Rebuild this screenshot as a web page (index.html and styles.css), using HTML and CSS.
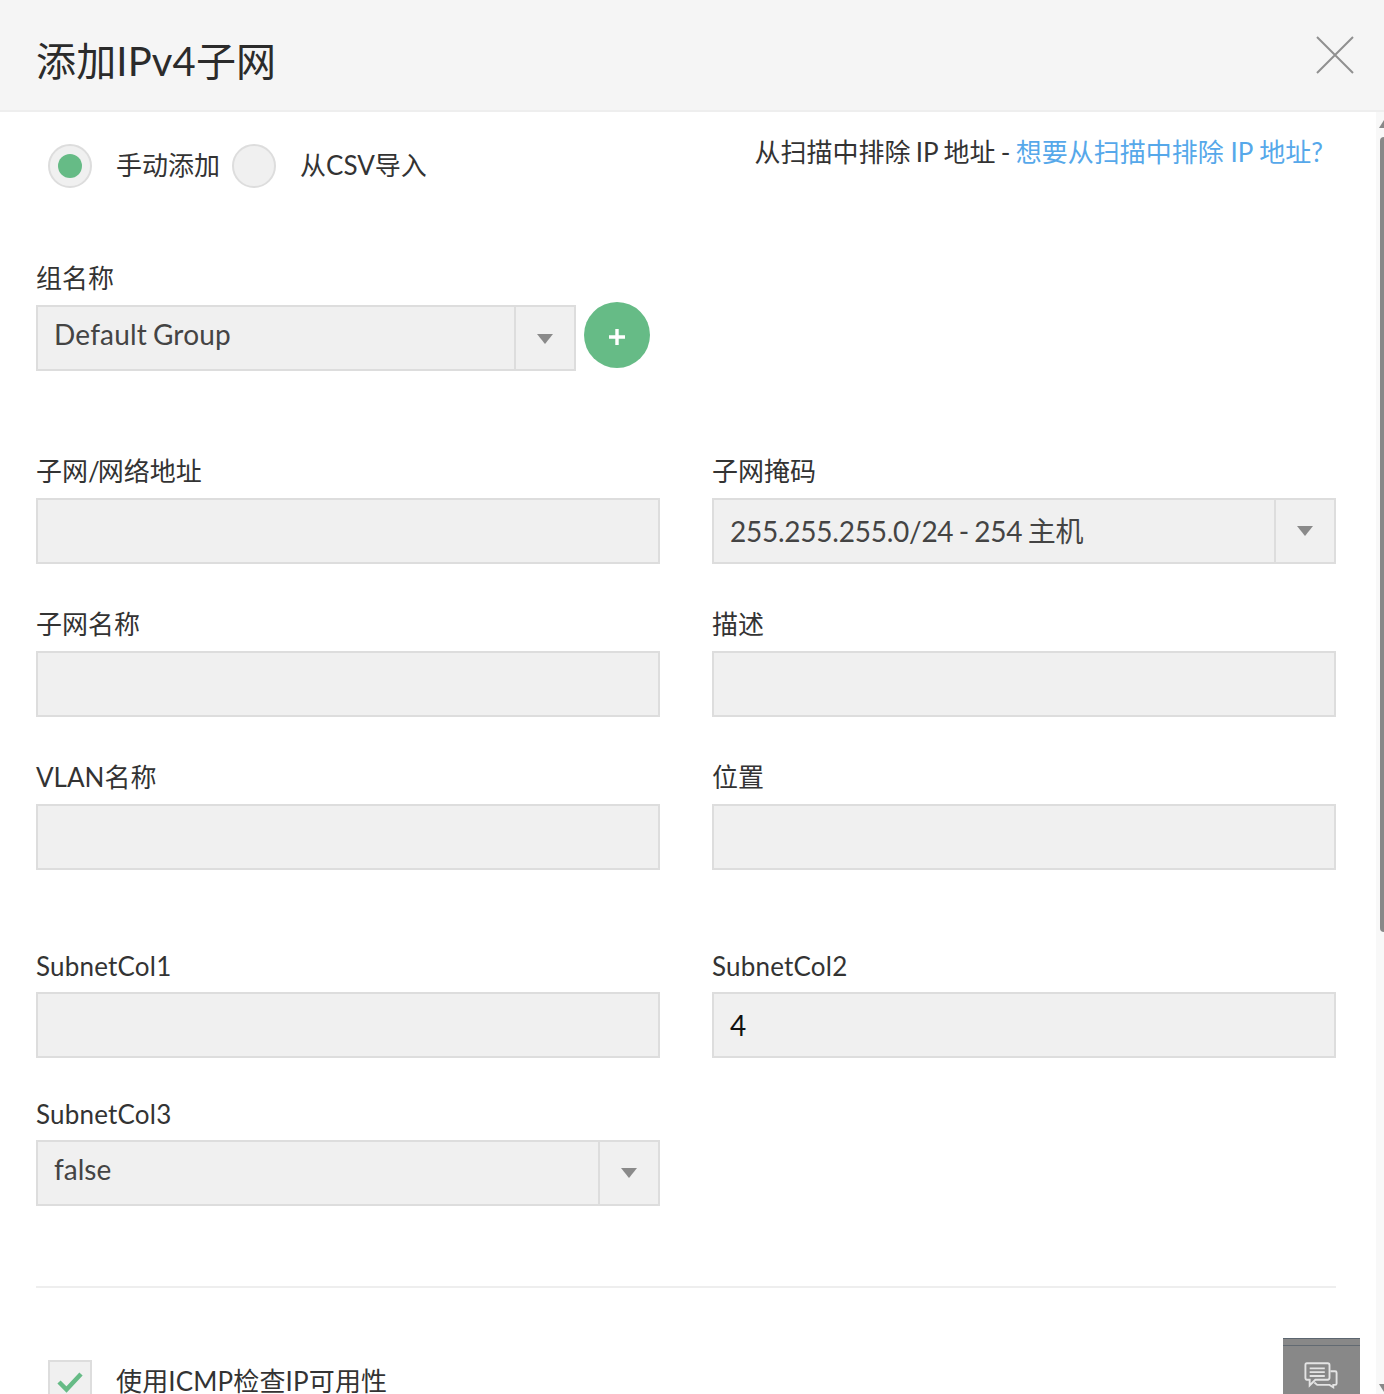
FILE: index.html
```html
<!DOCTYPE html>
<html lang="zh-CN">
<head>
<meta charset="utf-8">
<title>添加IPv4子网</title>
<link rel="stylesheet" href="styles.css">
</head>
<body>
<div class="dialog">
  <header class="head">
    <h1 class="title">添加IPv4子网</h1>
    <svg class="close" width="40" height="40" viewBox="0 0 40 40"><path d="M2 2L38 38M38 2L2 38" stroke="#909090" stroke-width="2" fill="none"/></svg>
  </header>
  <main class="body">
    <div class="top">
      <div class="radios">
        <span class="radio on"><i class="dot"></i></span><span class="radio-text first">手动添加</span>
        <span class="radio"></span><span class="radio-text">从CSV导入</span>
      </div>
      <p class="hint">从扫描中排除 IP 地址 - <a class="link">想要从扫描中排除 IP 地址?</a></p>
    </div>

    <div class="group">
      <label class="label">组名称</label>
      <div class="group-row">
        <div class="select wide"><span class="value group-value">Default Group</span><span class="arrow"><i class="tri"></i></span></div>
        <span class="add"><svg width="18" height="18" viewBox="0 0 18 18"><path d="M9 1V17M1 9H17" stroke="#fff" stroke-width="3.4"/></svg></span>
      </div>
    </div>

    <div class="grid">
      <div><label class="label">子网<span class="slash">/</span>网络地址</label><div class="field"></div></div>
      <div><label class="label">子网掩码</label><div class="select mask"><span class="value">255.255.255.0/24 - 254 主机</span><span class="arrow"><i class="tri"></i></span></div></div>
      <div><label class="label">子网名称</label><div class="field"></div></div>
      <div><label class="label">描述</label><div class="field"></div></div>
      <div><label class="label">VLAN名称</label><div class="field"></div></div>
      <div><label class="label">位置</label><div class="field"></div></div>
    </div>

    <div class="grid custom">
      <div><label class="label">SubnetCol1</label><div class="field"></div></div>
      <div><label class="label">SubnetCol2</label><div class="field filled">4</div></div>
      <div><label class="label">SubnetCol3</label><div class="select"><span class="value up">false</span><span class="arrow"><i class="tri"></i></span></div></div>
    </div>

    <hr class="rule">

    <div class="check-row">
      <span class="check"><svg width="26" height="22" viewBox="0 0 26 22"><path d="M2 11L9.500 18.500L24 3" stroke="#66bb86" stroke-width="4.500" fill="none"/></svg></span>
      <span class="radio-text check-text">使用ICMP检查IP可用性</span>
    </div>
  </main>

  <div class="scrollbar">
    <i class="sb-up"></i>
    <i class="sb-thumb"></i>
    <i class="sb-down"></i>
  </div>

  <div class="chat">
    <svg width="34" height="28" viewBox="0 0 36 28"><path d="M3 1.500H25Q27 1.500 27 3.500V17Q27 19 25 19H12L6 25V19H3Q1.500 19 1.500 17V3.500Q1.500 1.500 3 1.500Z" fill="none" stroke="#e4e4e4" stroke-width="2"/><path d="M6 7H22M6 11H22M6 15H22" stroke="#e4e4e4" stroke-width="2"/><path d="M28 10H33Q34.500 10 34.500 11.500V23Q34.500 24.500 33 24.500H31V27L27 24.500H14L11 22" fill="none" stroke="#e4e4e4" stroke-width="2"/></svg>
  </div>
</div>
</body>
</html>
```

FILE: styles.css
```css
* { box-sizing: border-box; }
html, body { margin: 0; padding: 0; height: 1394px; overflow: hidden; background: #fff; }
body { font-family: Lato, "Noto Sans CJK SC", sans-serif; color: #333; }
.dialog { position: relative; width: 1384px; height: 1394px; overflow: hidden; }

.head {
  height: 112px;
  background: #f5f5f5;
  border-bottom: 2px solid #eee;
  display: flex;
  align-items: center;
  justify-content: space-between;
  padding: 0 29px 0 36px;
}
.title { margin: 0; font-size: 40px; line-height: 50px; font-weight: 400; color: #2b2b2b; padding-top: 11px; letter-spacing: 0.15px; }
.close { margin-top: 1px; margin-bottom: 1px; }

.body { padding: 0 48px 0 36px; }

.top { display: flex; justify-content: space-between; align-items: flex-start; height: 151px; }
.radios { display: flex; align-items: center; margin: 32px 0 0 12px; height: 44px; }
.radio {
  width: 44px; height: 44px; border-radius: 50%;
  background: #f0f0f0; border: 2px solid #ddd;
  display: flex; align-items: center; justify-content: center;
  flex: none;
}
.dot { width: 24px; height: 24px; border-radius: 50%; background: #66bb86; }
.radio-text { font-size: 26px; line-height: 30px; margin-left: 24px; margin-bottom: 2px; color: #333; }
.radio-text.first { margin-right: 12px; }
.hint { margin: 23px 13px 0 0; font-size: 26px; line-height: 34px; color: #333; word-spacing: -1.25px; }
.link { color: #56a8ea; word-spacing: 0; }

.label { display: block; font-size: 26px; line-height: 30px; color: #333; margin-bottom: 10px; }
.slash { letter-spacing: -2px; }
.field {
  height: 66px; background: #f0f0f0; border: 2px solid #ddd;
  font-size: 28px; line-height: 62px; padding: 0 16px; color: #222;
}
.select {
  height: 66px; background: #f0f0f0; border: 2px solid #ddd;
  display: flex; align-items: stretch;
}
.value { flex: 1; font-size: 28px; line-height: 62px; padding-left: 16px; color: #444; }
.group-value { line-height: 54px; letter-spacing: 0.2px; word-spacing: -1.5px; }
.value.up { line-height: 54px; }
.mask .value { line-height: 62px; letter-spacing: -0.25px; word-spacing: -1.5px; }
.arrow {
  width: 60px; flex: none; border-left: 2px solid #ddd;
  display: flex; align-items: center; justify-content: center;
}
.tri { width: 0; height: 0; border-left: 8px solid transparent; border-right: 8px solid transparent; border-top: 10px solid #8a8a8a; margin-top: 1px; }
.grid .tri { margin-top: -1px; }

.group-row { display: flex; align-items: flex-start; }
.wide { width: 540px; margin-top: 2px; }
.add {
  width: 66px; height: 66px; border-radius: 50%; background: #66bb86;
  margin: -1px 0 0 8px; display: flex; align-items: center; justify-content: center;
  padding-top: 4px;
}

.grid { display: grid; grid-template-columns: 624px 624px; column-gap: 52px; row-gap: 46px; margin-top: 86px; }
.grid .label { line-height: 28px; margin-bottom: 13px; }
.custom { margin-top: 82px; row-gap: 42px; }
.custom .label { line-height: 28px; margin-bottom: 12px; letter-spacing: 0.2px; }
.filled { color: #111; }

.rule { margin: 80px 0 0; border: 0; height: 2px; background: #eee; }

.check-row { display: flex; align-items: flex-start; margin: 72px 0 0 12px; }
.check {
  width: 44px; height: 44px; flex: none; background: #f0f0f0; border: 2px solid #ddd;
  display: flex; align-items: center; justify-content: center;
}
.check-text { margin: 6px 0 0 24px; letter-spacing: 0.15px; }

.scrollbar { position: absolute; right: 0; top: 112px; bottom: 0; width: 8px; background: #f8f8f8; }
.sb-thumb { position: absolute; left: 4px; top: 25px; width: 4px; height: 795px; background: #888; border-radius: 4px 0 0 4px; }
.sb-up { position: absolute; left: 3px; top: 8px; width: 0; height: 0; border-left: 5px solid transparent; border-right: 5px solid transparent; border-bottom: 8px solid #888; }
.sb-down { position: absolute; left: 3px; bottom: 2px; width: 0; height: 0; border-left: 5px solid transparent; border-right: 5px solid transparent; border-top: 8px solid #888; }

.chat {
  position: absolute; left: 1283px; top: 1338px; width: 77px; height: 56px;
  background: #888; border-top: 1px solid #5c6670; box-shadow: inset 0 6px 0 #888, inset 0 7px 0 #626a72;
  display: flex; justify-content: center; padding: 22px 2px 0 0;
}
```
